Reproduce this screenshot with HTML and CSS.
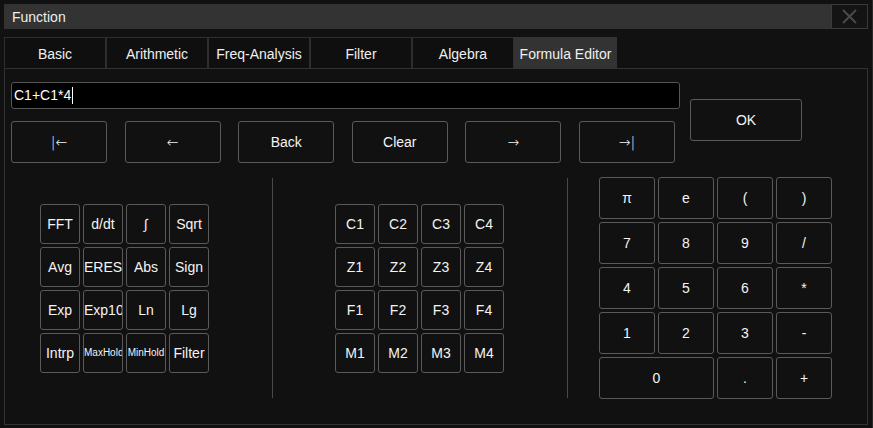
FILE: index.html
```html
<!DOCTYPE html>
<html>
<head>
<meta charset="utf-8">
<link rel="stylesheet" href="styles.css">
</head>
<body>
<div class="window">
  <div class="titlebar">
    <span class="title">Function</span>
    <div class="close">
      <svg width="15" height="15" viewBox="0 0 15 15"><path d="M1 1 L14 14 M14 1 L1 14" stroke="#4a4a4a" stroke-width="2" fill="none"/></svg>
    </div>
  </div>
  <div class="tabs">
    <div class="tab">Basic</div>
    <div class="tab">Arithmetic</div>
    <div class="tab">Freq-Analysis</div>
    <div class="tab">Filter</div>
    <div class="tab">Algebra</div>
    <div class="tab active">Formula Editor</div>
  </div>
  <div class="panel">
    <div class="top">
      <div class="editor">
        <div class="input">C1+C1*4<span class="caret"></span></div>
        <div class="nav">
          <div class="btn"><span class="arrow">|←</span></div>
          <div class="btn"><span class="arrow">←</span></div>
          <div class="btn">Back</div>
          <div class="btn">Clear</div>
          <div class="btn"><span class="arrow">→</span></div>
          <div class="btn"><span class="arrow">→|</span></div>
        </div>
      </div>
      <div class="btn ok">OK</div>
    </div>
    <div class="pads">
      <div class="grid small">
        <div class="btn">FFT</div><div class="btn">d/dt</div><div class="btn">∫</div><div class="btn">Sqrt</div>
        <div class="btn">Avg</div><div class="btn">ERES</div><div class="btn">Abs</div><div class="btn">Sign</div>
        <div class="btn">Exp</div><div class="btn">Exp10</div><div class="btn">Ln</div><div class="btn">Lg</div>
        <div class="btn">Intrp</div><div class="btn tiny">MaxHold</div><div class="btn tiny">MinHold</div><div class="btn">Filter</div>
      </div>
      <div class="divider first"></div>
      <div class="grid small src">
        <div class="btn">C1</div><div class="btn">C2</div><div class="btn">C3</div><div class="btn">C4</div>
        <div class="btn">Z1</div><div class="btn">Z2</div><div class="btn">Z3</div><div class="btn">Z4</div>
        <div class="btn">F1</div><div class="btn">F2</div><div class="btn">F3</div><div class="btn">F4</div>
        <div class="btn">M1</div><div class="btn">M2</div><div class="btn">M3</div><div class="btn">M4</div>
      </div>
      <div class="divider second"></div>
      <div class="grid num">
        <div class="btn">π</div><div class="btn">e</div><div class="btn">(</div><div class="btn">)</div>
        <div class="btn">7</div><div class="btn">8</div><div class="btn">9</div><div class="btn">/</div>
        <div class="btn">4</div><div class="btn">5</div><div class="btn">6</div><div class="btn">*</div>
        <div class="btn">1</div><div class="btn">2</div><div class="btn">3</div><div class="btn">-</div>
        <div class="btn zero">0</div><div class="btn">.</div><div class="btn">+</div>
      </div>
    </div>
  </div>
</div>
</body>
</html>
```
FILE: styles.css
```css
* { box-sizing: border-box; }
html, body { margin: 0; padding: 0; background: #111111; }
body {
  font-family: "Liberation Sans", Arial, sans-serif;
  font-size: 14px;
  color: #f2f2f2;
}
.window {
  width: 873px;
  height: 428px;
  padding: 4px 4px 3px 4px;
  display: flex;
  flex-direction: column;
  background: #111111;
  border-right: 1px solid #2a2a2a;
}
.titlebar {
  height: 25px;
  background: #333333;
  display: flex;
  align-items: center;
  flex: none;
}
.title { padding-left: 8px; color: #eeeeee; }
.close {
  margin-left: auto;
  width: 37px;
  height: 25px;
  background: #141414;
  border: 1px solid #3a3a3a;
  display: flex;
  align-items: center;
  justify-content: center;
}
.tabs {
  margin-top: 8px;
  height: 31px;
  display: flex;
  flex: none;
}
.tab {
  width: 102px;
  height: 31px;
  padding-top: 2px;
  border: 1px solid #2e2e2e;
  border-bottom: none;
  background: #0f0f0f;
  display: flex;
  align-items: center;
  justify-content: center;
  color: #f0f0f0;
}
.tab.active {
  width: 103px;
  background: #333333;
  border-color: #333333;
}
.panel {
  flex: 1;
  border: 1px solid #333333;
  background: #111111;
}
.top {
  display: flex;
  padding: 13px 0 0 6px;
}
.editor { width: 669px; }
.input {
  height: 27px;
  background: #000000;
  border: 1px solid #555555;
  border-radius: 3px;
  padding-left: 2px;
  line-height: 25px;
  color: #ffffff;
  display: flex;
  align-items: center;
}
.caret {
  display: inline-block;
  width: 1px;
  height: 17px;
  background: #ffffff;
  margin-left: 1px;
}
.btn {
  border: 1px solid #5a5a5a;
  border-radius: 3px;
  background: #111111;
  display: flex;
  align-items: center;
  justify-content: safe center;
  color: #f4f4f4;
  overflow: hidden;
  white-space: nowrap;
}
.arrow {
  font-family: "DejaVu Sans", sans-serif;
  font-size: 14px;
  font-weight: 300;
}
.nav {
  margin-top: 12px;
  width: 664px;
  display: flex;
  justify-content: space-between;
}
.nav .btn { width: 96px; height: 42px; }
.ok {
  margin-left: 10px;
  margin-top: 17px;
  width: 112px;
  height: 42px;
}
.pads {
  margin-top: 14px;
  padding-left: 35px;
  display: flex;
  align-items: center;
}
.grid { display: grid; gap: 3px; }
.grid.small {
  grid-template-columns: repeat(4, 40px);
  grid-auto-rows: 40px;
}
.grid.num {
  grid-template-columns: repeat(4, 56px);
  grid-auto-rows: 42px;
  margin-left: 31px;
}
.tiny { font-size: 10px; }
.zero { grid-column: span 2; }
.divider {
  width: 1px;
  height: 220px;
  background: #4a4a4a;
  margin-left: 63px;
}
.src { margin-left: 62px; }
```
